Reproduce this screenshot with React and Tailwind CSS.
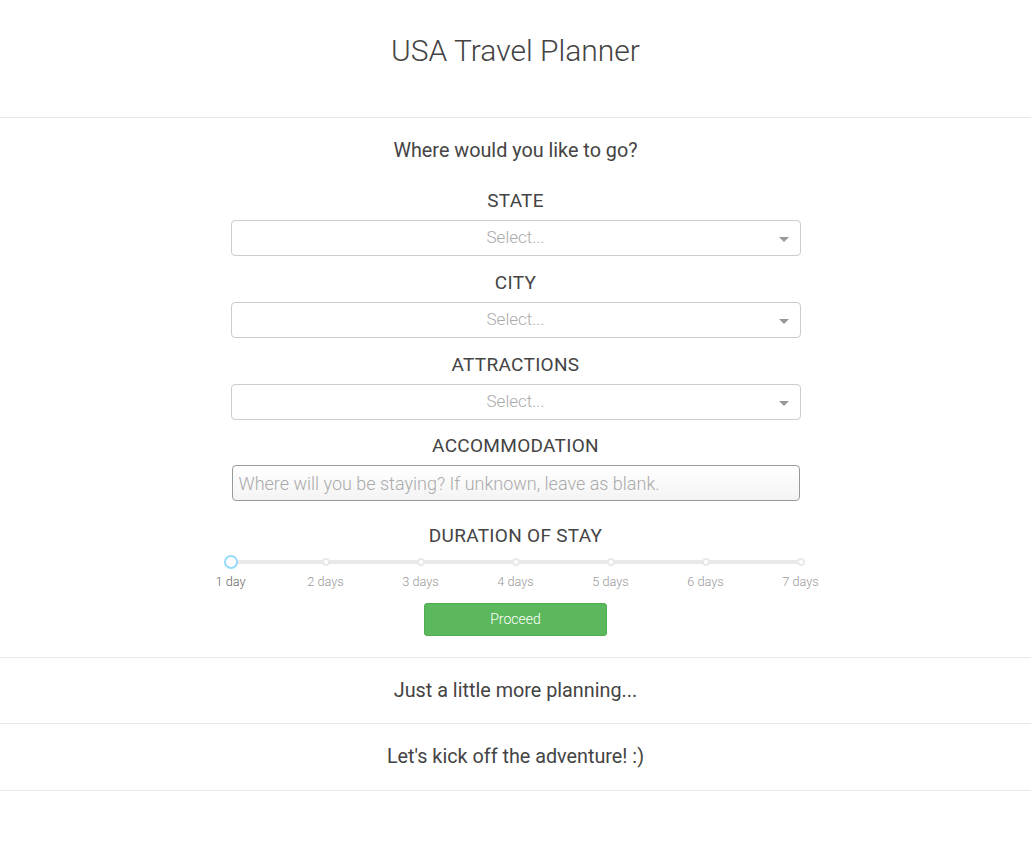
import React from "react";

const days = ["1 day", "2 days", "3 days", "4 days", "5 days", "6 days", "7 days"];

const Label = ({ children }) => (
  <div className="text-[19px] leading-6 tracking-[0.3px] text-[#444] uppercase">{children}</div>
);

const Select = () => (
  <div className="relative mt-[7px] h-9 w-full rounded border border-[#ccc] bg-white flex items-center justify-center">
    <span className="text-[17px] font-light text-[#aaa]">Select...</span>
    <span className="absolute right-[11px] top-[16px] w-0 h-0 border-x-[5px] border-x-transparent border-t-[5px] border-t-[#999]" />
  </div>
);

const SectionHead = ({ children, h = "h-[66px]" }) => (
  <div className={`${h} flex items-center justify-center text-[19.8px] text-[#444]`}>{children}</div>
);

export default function App() {
  return (
    <div className="min-h-[862px] bg-white" style={{ fontFamily: "Roboto, 'Liberation Sans', sans-serif" }}>
      {/* header */}
      <div className="h-[117px] flex items-center justify-center">
        <h1 className="text-[30px] font-light text-[#444] mt-[-16px]">USA Travel Planner</h1>
      </div>

      {/* step 1 */}
      <div className="border-t border-[#e8e8e8]">
        <SectionHead>Where would you like to go?</SectionHead>
        <div className="w-[570px] mx-auto flex flex-col items-center text-center pt-[5px]">
          <Label>State</Label>
          <Select />
          <div className="mt-[15px] w-full flex flex-col items-center">
            <Label>City</Label>
            <Select />
          </div>
          <div className="mt-[15px] w-full flex flex-col items-center">
            <Label>Attractions</Label>
            <Select />
          </div>
          <div className="mt-[14px] w-full flex flex-col items-center">
            <Label>Accommodation</Label>
            <input
              className="mt-[7px] h-9 w-[568px] rounded border border-[#999] bg-gradient-to-b from-white to-[#f4f4f4] px-[6px] text-[18px] font-light text-[#555] placeholder:text-[#aaa] outline-none"
              placeholder="Where will you be staying? If unknown, leave as blank."
            />
          </div>
          <div className="mt-[23px] w-full flex flex-col items-center">
            <Label>Duration of stay</Label>
            {/* slider */}
            <div className="relative mt-[7px] h-[14px] w-full">
              <div className="absolute left-0 right-0 top-[5px] h-1 rounded bg-[#e9e9e9]" />
              {days.map((d, i) => (
                <div
                  key={d}
                  className="absolute top-[3px] w-2 h-2 -ml-1 rounded-full border-2 border-[#e9e9e9] bg-white"
                  style={{ left: `${(i / 6) * 100}%` }}
                />
              ))}
              <div className="absolute left-0 top-0 -ml-[7px] w-[14px] h-[14px] rounded-full border-2 border-[#96dbfa] bg-white" />
            </div>
            <div className="relative mt-[3px] h-4 w-full">
              {days.map((d, i) => (
                <span
                  key={d}
                  className={`absolute -translate-x-1/2 text-[12.7px] font-light whitespace-nowrap ${i === 0 ? "text-[#666]" : "text-[#999]"}`}
                  style={{ left: `${(i / 6) * 100}%` }}
                >
                  {d}
                </span>
              ))}
            </div>
          </div>
          <button className="mt-[15px] mb-[21px] h-[33px] w-[183px] rounded-[3px] border border-[#4cae4c] bg-[#5cb85c] text-[14px] font-light text-white">
            Proceed
          </button>
        </div>
      </div>

      {/* step 2 */}
      <div className="border-t border-[#e8e8e8]">
        <SectionHead h="h-[65px]">Just a little more planning...</SectionHead>
      </div>

      {/* step 3 */}
      <div className="border-t border-b border-[#e8e8e8]">
        <SectionHead>Let's kick off the adventure! :)</SectionHead>
      </div>
    </div>
  );
}
